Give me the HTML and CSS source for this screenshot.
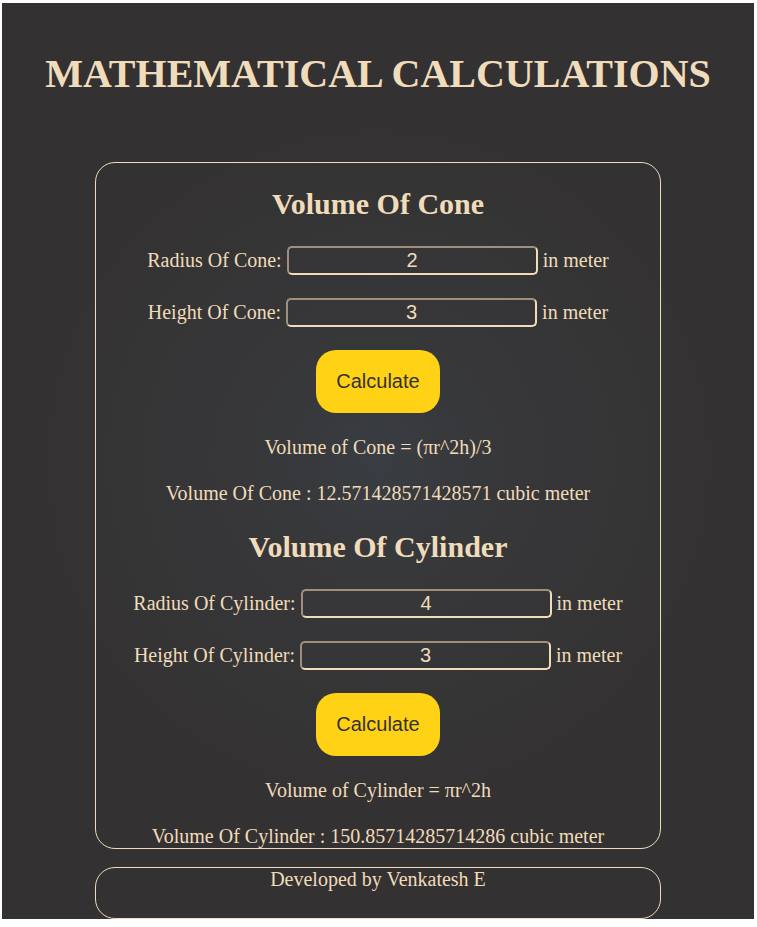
FILE: index.html
```html
<!DOCTYPE html>
<html lang="en">
<head>
<meta charset="utf-8">
<title>Mathematical Calculations</title>
<link rel="stylesheet" href="styles.css">
</head>
<body>
<div class="page">
  <h1 class="title">MATHEMATICAL CALCULATIONS</h1>
  <main class="card">
    <form class="calc">
      <h2 class="heading">Volume Of Cone</h2>
      <div class="row"><label for="cone-r">Radius Of Cone:</label><input class="field" id="cone-r" type="number" value="2"><span>in meter</span></div>
      <div class="row"><label for="cone-h">Height Of Cone:</label><input class="field" id="cone-h" type="number" value="3"><span>in meter</span></div>
      <button class="button" type="button">Calculate</button>
      <p class="line">Volume of Cone = (πr^2h)/3</p>
      <p class="line">Volume Of Cone : 12.571428571428571 cubic meter</p>
    </form>
    <form class="calc">
      <h2 class="heading">Volume Of Cylinder</h2>
      <div class="row"><label for="cyl-r">Radius Of Cylinder:</label><input class="field" id="cyl-r" type="number" value="4"><span>in meter</span></div>
      <div class="row"><label for="cyl-h">Height Of Cylinder:</label><input class="field" id="cyl-h" type="number" value="3"><span>in meter</span></div>
      <button class="button" type="button">Calculate</button>
      <p class="line">Volume of Cylinder = πr^2h</p>
      <p class="line">Volume Of Cylinder : 150.85714285714286 cubic meter</p>
    </form>
  </main>
  <footer class="footer">Developed by Venkatesh E</footer>
</div>
</body>
</html>
```
FILE: styles.css
```css
* {
  box-sizing: border-box;
}

body {
  margin: 3px 3px 8px 2px;
  background: #ffffff;
}

.page {
  display: flex;
  flex-direction: column;
  align-items: center;
  background: radial-gradient(circle, #393e44 0%, #38393c 12%, #363638 30%, #353435 46%, #343132 60%);
  color: #f0dcba;
  font-family: "Liberation Serif", "Times New Roman", serif;
  font-size: 20px;
  line-height: normal;
}

.title {
  margin: 48px 0 65px;
  font-size: 40px;
  line-height: 46px;
}

.card,
.footer {
  width: calc(75% + 2px);
  border: 1px solid #f0dcba;
  border-radius: 20px;
}

.card {
  display: grid;
  gap: 1px;
}

.calc {
  display: flex;
  flex-direction: column;
  align-items: center;
  gap: 23px;
}

.heading {
  margin: 24px 0 2px;
  font-size: 30px;
  line-height: 34px;
}

.row {
  display: flex;
  align-items: baseline;
  gap: 5px;
}

.field {
  width: 251px;
  height: 29px;
  padding: 1px 2px;
  border: 2px solid #f0dcba;
  border-top-color: #9f8f7b;
  border-left-color: #9f8f7b;
  border-radius: 5px;
  background: transparent;
  color: inherit;
  font-family: "Liberation Sans", Arial, sans-serif;
  font-size: 20px;
  text-align: center;
  appearance: textfield;
}

.field::-webkit-inner-spin-button {
  appearance: none;
  margin: 0;
}

.button {
  padding: 20px;
  border: 0;
  border-radius: 20px;
  background: #ffd215;
  color: #343132;
  font-family: "Liberation Sans", Arial, sans-serif;
  font-size: 20px;
  line-height: 23px;
}

.line {
  margin: 0;
}

.footer {
  margin-top: 18px;
  padding-bottom: 27px;
  text-align: center;
}
```
